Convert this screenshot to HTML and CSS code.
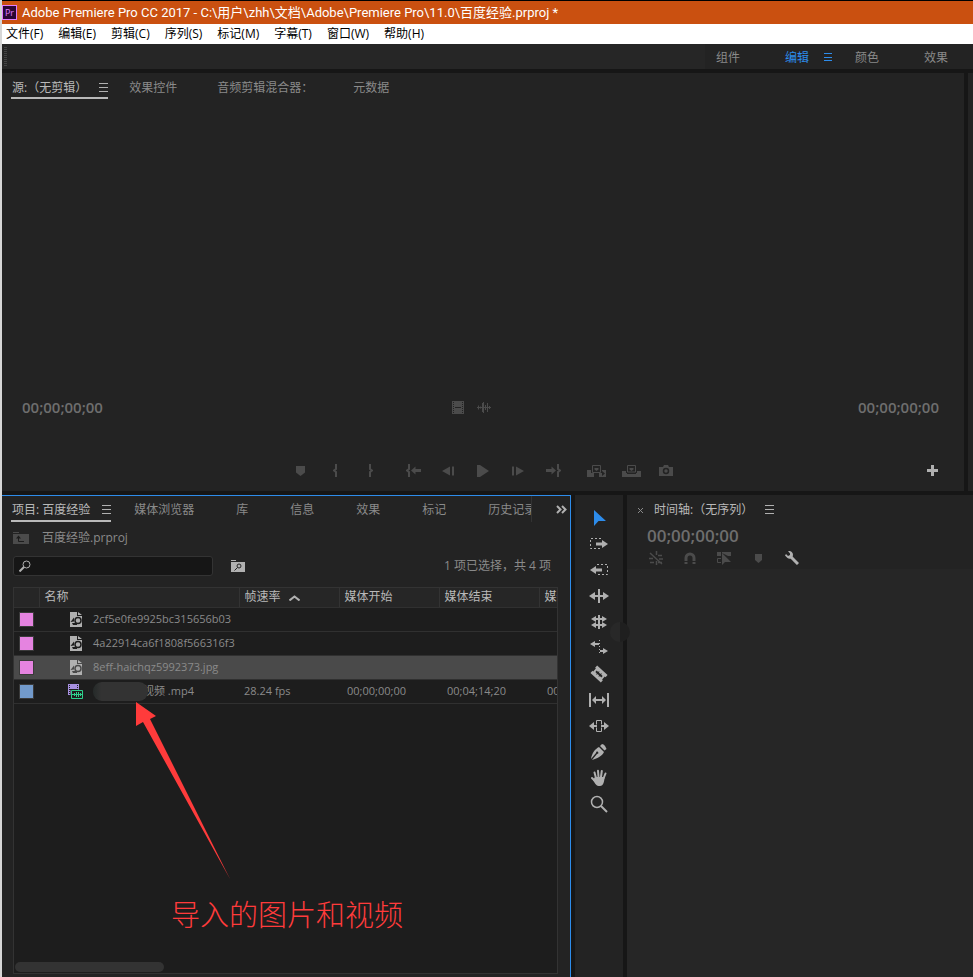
FILE: index.html
```html
<!DOCTYPE html>
<html lang="zh-CN">
<head>
<meta charset="utf-8">
<title>Adobe Premiere Pro CC 2017</title>
<link rel="stylesheet" href="styles.css">
</head>
<body>
<header class="titlebar">
  <span class="app-logo">Pr</span>
  <h1 class="title">Adobe Premiere Pro CC 2017 - C:\用户\zhh\文档\Adobe\Premiere Pro\11.0\百度经验.prproj *</h1>
</header>
<nav class="menubar">
  <button>文件(F)</button><button>编辑(E)</button><button>剪辑(C)</button><button>序列(S)</button><button>标记(M)</button><button>字幕(T)</button><button>窗口(W)</button><button>帮助(H)</button>
</nav>
<nav class="workspaces">
  <span class="grip"></span>
  <div class="workspace-list">
    <a href="#">组件</a>
    <a href="#" class="current">编辑<svg class="burger" width="9" height="9" viewBox="0 0 9 9"><path d="M0 .5h8M0 4.5h8M0 7.5h8"/></svg></a>
    <a href="#">颜色</a>
    <a href="#">效果</a>
  </div>
</nav>
<main class="workarea">
  <div class="upper">
    <section class="panel source">
      <div class="tabs">
        <button class="tab active">源:（无剪辑）<svg class="burger" width="9" height="9" viewBox="0 0 9 9"><path d="M0 .5h9M0 4.5h9M0 8.5h9"/></svg></button>
        <button class="tab">效果控件</button>
        <button class="tab">音频剪辑混合器：</button>
        <button class="tab">元数据</button>
      </div>
      <div class="monitor"></div>
      <div class="times">
        <span class="timecode">00;00;00;00</span>
        <span class="drag-icons">
          <svg width="12" height="13" viewBox="0 0 12 13"><path fill="#4b4b4b" d="M0 0h12v13H0z"/><path stroke="#232323" stroke-dasharray="1 1" d="M1.5 1v12M10.5 1v12"/><path stroke="#232323" d="M3 6.5h6"/></svg>
          <svg width="14" height="11" viewBox="0 0 14 11"><path stroke="#4b4b4b" d="M0 5.5h14M1.5 3.5v4M3.5 4.5v2M5.5 1v9M6.5 0v11M8.5 3v5M10.5 1v9M12.5 4v3"/></svg>
        </span>
        <span class="timecode">00;00;00;00</span>
      </div>
      <div class="transport">
        <div class="group">
          <button aria-label="添加标记"><svg width="9" height="10" viewBox="0 0 9 10"><path fill="#4b4b4b" d="M0 0h9v6.5L4.5 10 0 6.5z"/></svg></button>
          <button aria-label="标记入点"><svg width="5" height="13" viewBox="0 0 5 13"><path class="line" d="M4 .5H3v4.5L1 6.5 3 8v4.5h1"/></svg></button>
          <button aria-label="标记出点"><svg width="5" height="13" viewBox="0 0 5 13"><path class="line" d="M1 .5h1v4.5l2 1.5L2 8v4.5H1"/></svg></button>
        </div>
        <div class="group">
          <button aria-label="转到入点"><svg width="15" height="13" viewBox="0 0 15 13"><path class="line" d="M4 .5H3v4.5L1 6.5 3 8v4.5h1"/><path fill="#4b4b4b" d="M5 6.5 9.5 2.5V5H15v3H9.5v2.5z"/></svg></button>
          <button aria-label="后退一帧"><svg width="12" height="10" viewBox="0 0 12 10"><path fill="#4b4b4b" d="M0 5 8 .5v9zM10 .5h2v9h-2z"/></svg></button>
          <button aria-label="播放"><svg width="12" height="12" viewBox="0 0 12 12"><path fill="#4b4b4b" d="M0 0h3l9 6-9 6H0z"/></svg></button>
          <button aria-label="前进一帧"><svg width="12" height="10" viewBox="0 0 12 10"><path fill="#4b4b4b" d="M12 5 4 .5v9zM0 .5h2v9H0z"/></svg></button>
          <button aria-label="转到出点"><svg width="15" height="13" viewBox="0 0 15 13"><path class="line" d="M11 .5h1v4.5l2 1.5L12 8v4.5h-1"/><path fill="#4b4b4b" d="M10 6.5 5.5 2.5V5H0v3h5.5v2.5z"/></svg></button>
        </div>
        <div class="group">
          <button aria-label="插入"><svg width="19" height="12" viewBox="0 0 19 12"><path fill="#4b4b4b" d="M0 5h4v3h3v4H0zM12 8h3V5h4v7h-7z"/><path fill="none" stroke="#4b4b4b" d="M5.5.5h8v7h-8z"/><path fill="#4b4b4b" d="M7.5 3h4v1.5L9.5 6l-2-1.5z"/><path fill="#232323" d="M15 6l3 2.5-3 2.5z"/></svg></button>
          <button aria-label="覆盖"><svg width="19" height="12" viewBox="0 0 19 12"><path fill="#4b4b4b" d="M0 6h4v2h11V6h4v6H0z"/><path fill="#232323" d="M5 8h9v1H5z"/><path fill="none" stroke="#4b4b4b" d="M5.5.5h8v6.5h-8z"/><path fill="#4b4b4b" d="M7.5 3h4v1.5L9.5 6l-2-1.5z"/></svg></button>
          <button aria-label="导出帧"><svg width="14" height="11" viewBox="0 0 14 11"><path fill="#4b4b4b" d="M0 2h4l1-2h4l1 2h4v9H0z"/><circle cx="7" cy="6" r="2.5" fill="none" stroke="#232323" stroke-width="1.5"/></svg></button>
        </div>
        <button class="add" aria-label="按钮编辑器"><svg width="11" height="11" viewBox="0 0 11 11"><path stroke="#b0b0b0" stroke-width="3" d="M5.5 0v11M0 5.5h11"/></svg></button>
      </div>
    </section>
    <section class="panel"></section>
  </div>
  <div class="lower">
    <section class="panel project">
      <div class="tab-row">
        <div class="tabs">
          <button class="tab active">项目: 百度经验<svg class="burger" width="9" height="9" viewBox="0 0 9 9"><path d="M0 .5h9M0 4.5h9M0 8.5h9"/></svg></button>
          <button class="tab">媒体浏览器</button>
          <button class="tab">库</button>
          <button class="tab">信息</button>
          <button class="tab">效果</button>
          <button class="tab">标记</button>
          <button class="tab">历史记录</button>
        </div>
        <button class="more" aria-label="更多面板"><svg width="11" height="9" viewBox="0 0 11 9"><path fill="none" stroke="#b0b0b0" stroke-width="2" d="M1 1l3.5 3.5L1 8M6 1l3.5 3.5L6 8"/></svg></button>
      </div>
      <div class="path">
        <svg width="16" height="12" viewBox="0 0 16 12"><path fill="#4b4b4b" d="M0 0h6v1H0zM0 2h16v10H0z"/><path fill="none" stroke="#1d1d1d" d="M5.5 4v5.5H11"/><path fill="#1d1d1d" d="M3 6.5 5.5 3.5 8 6.5z"/></svg>
        <span>百度经验.prproj</span>
      </div>
      <div class="search-row">
        <label class="search">
          <svg width="12" height="12" viewBox="0 0 12 12"><circle cx="7.5" cy="4.5" r="3.5" fill="none" stroke="#b0b0b0"/><path stroke="#b0b0b0" stroke-width="2" d="M5 7 .5 11.5"/></svg>
          <input type="text" aria-label="搜索">
        </label>
        <button class="bin" aria-label="从查询创建新的搜索素材箱"><svg width="14" height="12" viewBox="0 0 14 12"><path fill="#b0b0b0" d="M0 0h5v1H0zM0 2h14v10H0z"/><circle cx="8" cy="6" r="2" fill="none" stroke="#232323"/><path stroke="#232323" d="M6.5 7.5l-3 3"/></svg></button>
        <span class="status">1 项已选择，共 4 项</span>
      </div>
      <div class="bin-list">
        <table>
          <colgroup><col class="c-label"><col class="c-name"><col class="c-data"><col class="c-data"><col class="c-data"><col class="c-data"></colgroup>
          <thead>
            <tr><th></th><th>名称</th><th>帧速率<svg class="sort" width="11" height="6" viewBox="0 0 11 6"><path fill="none" stroke="#b0b0b0" stroke-width="2" d="M.5 5.5l5-4 5 4"/></svg></th><th>媒体开始</th><th>媒体结束</th><th>媒体持续时间</th></tr>
          </thead>
          <tbody>
            <tr><td><i class="swatch pink"></i></td><td><div class="item"><svg width="16" height="15" viewBox="0 0 16 15"><path fill="#b0b0b0" d="M2 0h7v4h5v11H2zM10 0l4 3h-4z"/><circle cx="10" cy="8.5" r="3" fill="none" stroke="#1d1d1d" stroke-width="1.5"/><path fill="#1d1d1d" d="M2.5 10 6 5.5v4zM4 11h5v2H5z"/></svg><span>2cf5e0fe9925bc315656b03</span></div></td><td></td><td></td><td></td><td></td></tr>
            <tr><td><i class="swatch pink"></i></td><td><div class="item"><svg width="16" height="15" viewBox="0 0 16 15"><path fill="#b0b0b0" d="M2 0h7v4h5v11H2zM10 0l4 3h-4z"/><circle cx="10" cy="8.5" r="3" fill="none" stroke="#1d1d1d" stroke-width="1.5"/><path fill="#1d1d1d" d="M2.5 10 6 5.5v4zM4 11h5v2H5z"/></svg><span>4a22914ca6f1808f566316f3</span></div></td><td></td><td></td><td></td><td></td></tr>
            <tr class="selected"><td><i class="swatch pink"></i></td><td><div class="item"><svg width="16" height="15" viewBox="0 0 16 15"><path fill="#b0b0b0" d="M2 0h7v4h5v11H2zM10 0l4 3h-4z"/><circle cx="10" cy="8.5" r="3" fill="none" stroke="#4a4a4a" stroke-width="1.5"/><path fill="#4a4a4a" d="M2.5 10 6 5.5v4zM4 11h5v2H5z"/></svg><span>8eff-haichqz5992373.jpg</span></div></td><td></td><td></td><td></td><td></td></tr>
            <tr><td><i class="swatch blue"></i></td><td><div class="item"><svg width="16" height="15" viewBox="0 0 16 15"><path fill="#a68fe0" d="M0 0h11v11H0z"/><path stroke="#1d1d1d" stroke-dasharray="1 1" d="M1.5 1v10M9.5 1v5"/><path fill="#1d1d1d" d="M2 5h7v1H2zM2.5 5.5H16V15H2.5z"/><path fill="none" stroke="#2fd08c" d="M3.5 6.5h11v8h-11z"/><path stroke="#2fd08c" d="M4 10.5h10M6.5 9v3M8.5 8v5M10.5 8v5M12.5 9v3"/></svg><span class="masked"></span><span>视频 .mp4</span></div></td><td>28.24 fps</td><td class="tc">00;00;00;00</td><td class="tc">00;04;14;20</td><td class="tc">00;04;14;21</td></tr>
          </tbody>
        </table>
        <div class="scrollbar"></div>
        <svg class="arrow" width="96" height="180" viewBox="0 0 96 180"><path fill="#ff3b3b" d="M1 1 21 15l-6 3L95 178 8 21 1 25z"/></svg>
        <p class="note">导入的图片和视频</p>
      </div>
    </section>
    <section class="panel tools">
      <button aria-label="选择工具"><svg width="20" height="20" viewBox="0 0 20 20"><path fill="#2d8ceb" d="M5 2v16l4.5-5H17z"/></svg></button>
      <button aria-label="向前选择轨道工具"><svg width="20" height="20" viewBox="0 0 20 20"><path fill="none" stroke="#b0b0b0" stroke-dasharray="2 2" d="M12 4.5H1.5v10H12"/><path fill="#b0b0b0" d="M7 8.5h6V6l6 4-6 4v-2.5H7z"/></svg></button>
      <button aria-label="向后选择轨道工具"><svg width="20" height="20" viewBox="0 0 20 20"><path fill="none" stroke="#b0b0b0" stroke-dasharray="2 2" d="M8 4.5h10.5v10H8"/><path fill="#b0b0b0" d="M13 8.5H7V6l-6 4 6 4v-2.5h6z"/></svg></button>
      <button aria-label="波纹编辑工具"><svg width="20" height="20" viewBox="0 0 20 20"><path fill="#b0b0b0" d="M9 3h2v14H9zM0 10l6-4v3h8V6l6 4-6 4v-3H6v3z"/></svg></button>
      <button aria-label="滚动编辑工具"><svg width="20" height="20" viewBox="0 0 20 20"><path fill="#b0b0b0" d="M9 3h2v14H9zM2 7l5-3v2h6V4l5 3-5 3V8H7v2zM2 13l5-3v2h6v-2l5 3-5 3v-2H7v2z"/></svg></button>
      <button aria-label="比率拉伸工具"><svg width="20" height="20" viewBox="0 0 20 20"><path fill="#b0b0b0" d="M1 6l5-3v2h4v2H6v2zM19 13l-5-3v2h-3v2h3v2z"/><path stroke="#b0b0b0" stroke-dasharray="1 2" d="M10.5 2v15"/></svg></button>
      <button aria-label="剃刀工具"><svg width="20" height="20" viewBox="0 0 20 20"><g transform="rotate(42 10 10)"><path fill="#b0b0b0" d="M3 5h14v3h-1v4h1v3H3v-3h1V8H3z"/><path fill="#232323" d="M6 9h2V8h1v1h2V8h1v1h2v2h-2v1h-1v-1H9v1H8v-1H6z"/></g></svg></button>
      <button aria-label="外滑工具"><svg width="20" height="20" viewBox="0 0 20 20"><path fill="#b0b0b0" d="M0 3h2v14H0zM18 3h2v14h-2zM3 10l4-4v3h6V6l4 4-4 4v-3H7v3z"/></svg></button>
      <button aria-label="内滑工具"><svg width="20" height="20" viewBox="0 0 20 20"><path fill="#b0b0b0" d="M0 10l5-4v3h10V6l5 4-5 4v-3H5v3z"/><path fill="#232323" d="M8 8h4v4H8z"/><path fill="none" stroke="#b0b0b0" d="M7.5 8.5v-4h5v4M7.5 11.5v4h5v-4"/></svg></button>
      <button aria-label="钢笔工具"><svg width="20" height="20" viewBox="0 0 20 20"><path fill="#b0b0b0" d="M11 4l2-2c2 0 4 3 4.5 5l-2 1.5zM10 5l5 5c-2 4-6 6-12 8l5-6c1 0 2-1 1-2s-2 0-2 1l-5 6c1-6 4-10 8-12z"/></svg></button>
      <button aria-label="手形工具"><svg width="20" height="20" viewBox="0 0 20 20"><path fill="none" stroke="#b0b0b0" stroke-width="2" stroke-linecap="round" d="M7 10 5.5 4.5M9.5 9 9 2.800M12 9l.8-6M14.5 10.5 16.5 5.5M6 13 3 10"/><path fill="#b0b0b0" d="M6 9h9.5c0 4-1 9-4.5 9-4 0-4.5-2-7-6z"/></svg></button>
      <button aria-label="缩放工具"><svg width="20" height="20" viewBox="0 0 20 20"><circle cx="8" cy="8" r="5.5" fill="none" stroke="#b0b0b0" stroke-width="1.5"/><path stroke="#b0b0b0" stroke-width="2" d="M12 12l6 6"/></svg></button>
    </section>
    <section class="panel timeline">
      <div class="tabs">
        <button class="close" aria-label="关闭"><svg width="5" height="5" viewBox="0 0 5 5"><path stroke="#8a8a8a" d="M0 0l5 5M5 0 0 5"/></svg></button>
        <button class="tab open">时间轴:（无序列）<svg class="burger" width="9" height="9" viewBox="0 0 9 9"><path d="M0 .5h9M0 4.5h9M0 8.5h9"/></svg></button>
      </div>
      <span class="timecode large">00;00;00;00</span>
      <div class="timeline-tools">
        <button aria-label="嵌套"><svg width="14" height="14" viewBox="0 0 14 14"><path stroke="#4b4b4b" stroke-width="1.5" d="M7.5 0v4M7.5 10v4M9 4.5h4M0 7.5h4M10 8h4M1 11.5h4M9 11.5h4M1 2l12 11"/></svg></button>
        <button aria-label="对齐"><svg width="12" height="12" viewBox="0 0 12 12"><path fill="none" stroke="#4b4b4b" stroke-width="3" d="M2 12V6a4 4 0 0 1 8 0v6"/><path stroke="#232323" d="M0 9.5h12"/></svg></button>
        <button aria-label="链接选择项"><svg width="14" height="14" viewBox="0 0 14 14"><path fill="#4b4b4b" d="M0 1h4v4H0zM5 1h9v4h-3L5 2zM5 2v12l3-3h6z"/><path fill="none" stroke="#4b4b4b" d="M4 7.5H.5v4H4"/></svg></button>
        <button aria-label="添加标记"><svg width="7" height="9" viewBox="0 0 7 9"><path fill="#4b4b4b" d="M0 0h7v6L3.5 9 0 6z"/></svg></button>
        <button aria-label="时间轴显示设置"><svg width="14" height="14" viewBox="0 0 14 14"><path fill="none" stroke="#b0b0b0" stroke-width="3" d="M5.5 5.5 13 13"/><path fill="#b0b0b0" d="M3 0c3-.5 5 1.5 5 4S5 9 2.5 7L0 4.5 1 3l2 2 2-1V2.5z"/></svg></button>
      </div>
      <div class="tracks"></div>
    </section>
  </div>
</main>
</body>
</html>
```
FILE: styles.css
```css
* { box-sizing: border-box; }

body {
  margin: 0;
  height: 100vh;
  display: flex;
  flex-direction: column;
  overflow: hidden;
  border-left: 2px solid #d6d6d6;
  background: #161616;
  color: #8a8a8a;
  font: 12px/16px "Open Sans", "Noto Sans CJK SC", sans-serif;
}

button {
  display: flex;
  align-items: center;
  justify-content: center;
  padding: 0;
  border: 0;
  background: none;
  color: inherit;
  font: inherit;
  white-space: nowrap;
}

a { color: inherit; text-decoration: none; }
svg { display: block; flex: none; }
.burger path { stroke: #b0b0b0; }
.line { fill: none; stroke: #4b4b4b; stroke-width: 2; }

.titlebar {
  display: flex;
  align-items: center;
  gap: 5px;
  height: 24px;
  border-top: 1px solid #000;
  background: #ca5010;
  color: #fff;
}
.app-logo {
  width: 15px;
  height: 15px;
  border: 1px solid #e07cff;
  background: #2a0634;
  color: #e07cff;
  font-size: 9px;
  line-height: 13px;
  text-align: center;
}
.title {
  margin: 0;
  font-family: Roboto, "Noto Sans CJK SC", sans-serif;
  font-size: 13px;
  font-weight: 400;
  white-space: nowrap;
}

.menubar {
  display: flex;
  gap: 15px;
  height: 20px;
  padding-left: 4px;
  background: #fff;
  color: #000;
}

.workspaces {
  display: flex;
  justify-content: space-between;
  height: 25px;
  background: #262626;
}
.grip {
  width: 3px;
  margin: 3px 2px;
  background: repeating-linear-gradient(#444 0 1px, #262626 1px 2px);
}
.workspace-list {
  display: flex;
  align-items: center;
  gap: 45px;
  padding: 2px 25px 0 11px;
  background: #232323;
}
.workspace-list .current {
  display: flex;
  align-items: center;
  gap: 15px;
  margin-right: -23px;
  color: #2d8ceb;
}
.current .burger path { stroke: #2d8ceb; }

.workarea {
  flex: 1;
  display: grid;
  grid-template-rows: 418fr 482fr;
  gap: 4px;
  padding-top: 4px;
  min-height: 0;
}
.upper { display: grid; grid-template-columns: 1fr 5px; gap: 4px; }
.lower {
  display: grid;
  grid-template-columns: 569fr 48px 346fr;
  gap: 4px;
  min-height: 0;
}
.panel { min-width: 0; background: #232323; }

.tabs { display: flex; gap: 42px; height: 26px; overflow: hidden; }
.tab { padding-top: 5px; border-bottom: 2px solid transparent; }
.project .tab { padding-top: 3px; }
.tab.active {
  margin-right: -19px;
  padding-left: 1px;
  border-color: #b9b9b9;
  color: #b9b9b9;
}
.tab .burger { margin-left: 12px; }

.source { display: flex; flex-direction: column; padding: 0 9px; }
.source .tabs { gap: 40px; }
.monitor { flex: 1; }
.timecode { color: #6e6e6e; font-size: 15px; font-weight: 600; line-height: 20px; }
.times {
  display: flex;
  align-items: center;
  justify-content: space-between;
  padding: 0 16px 0 11px;
}
.drag-icons { display: flex; align-items: center; gap: 13px; padding-right: 18px; }
.transport {
  display: grid;
  grid-template-columns: 1fr auto auto auto 1fr;
  gap: 8px;
  align-items: center;
  height: 74px;
  padding-top: 33px;
}
.group { display: flex; }
.group:first-child { grid-column: 2; }
.group button { width: 35px; height: 20px; }
.add { justify-self: end; height: 20px; margin-right: 17px; }

.project {
  display: flex;
  flex-direction: column;
  padding: 0 12px 3px 9px;
  border: solid #2d8ceb;
  border-width: 1px 1px 0 0;
}
.tab-row { display: flex; justify-content: space-between; margin-right: -9px; }
.tab-row .tabs { width: 521px; min-width: 0; border-right: 1px solid #333; }
.path { display: flex; align-items: center; gap: 13px; height: 32px; padding-left: 2px; }
.search-row { display: flex; align-items: center; padding: 2px 7px 11px 2px; }
.search {
  display: flex;
  align-items: center;
  width: 200px;
  height: 20px;
  padding-left: 5px;
  border: 1px solid #333;
  border-radius: 3px;
  background: #161616;
}
.search input {
  flex: 1;
  min-width: 0;
  border: 0;
  outline: 0;
  background: none;
  color: #b9b9b9;
  font: inherit;
}
.bin { margin-left: 18px; }
.status { margin-left: auto; }

.bin-list {
  position: relative;
  flex: 1;
  display: flex;
  flex-direction: column;
  justify-content: space-between;
  margin-left: 2px;
  padding-bottom: 1px;
  overflow: hidden;
  border: 1px solid #333;
  background: #1d1d1d;
}
table { width: 625px; table-layout: fixed; border-collapse: collapse; }
.c-label { width: 25px; }
.c-name { width: 200px; }
.c-data { width: 100px; }
th, td { padding: 0 5px; border-bottom: 1px solid #303030; white-space: nowrap; overflow: hidden; }
th {
  height: 19px;
  border-right: 1px solid #333;
  background: #262626;
  color: #b9b9b9;
  font-weight: 400;
  text-align: left;
}
.sort { display: inline-block; margin-left: 8px; }
td { height: 24px; font-size: 11px; }
td.tc { padding-left: 8px; }
.selected { background: #4a4a4a; }
.swatch { display: block; width: 15px; height: 15px; border: 1px solid #3a3a3a; }
.pink { background: #e583e0; }
.blue { background: #729acb; }
.item { display: flex; align-items: center; padding-left: 24px; }
.item svg { margin-right: 9px; }
.masked {
  position: relative;
  width: 55px;
  height: 19px;
  margin-right: -5px;
  border-radius: 9px;
  background: linear-gradient(90deg, #252a29, #333 15%, #333);
}
.scrollbar { width: 149px; height: 10px; margin-left: 1px; border-radius: 5px; background: #333; }
.arrow { position: absolute; left: 121px; top: 113px; }
.note {
  position: absolute;
  left: 157px;
  top: 308px;
  margin: 0;
  color: #ff3b3b;
  font-size: 29px;
  font-weight: 300;
  line-height: 38px;
  white-space: nowrap;
}

.tools {
  position: relative;
  display: flex;
  flex-direction: column;
  align-items: center;
  gap: 6px;
  padding-top: 13px;
}
.tools::after {
  content: "";
  position: absolute;
  left: 35px;
  top: 127px;
  width: 20px;
  height: 20px;
  border-radius: 10px;
  background: linear-gradient(90deg, #282828 50%, #1f1f1f 50%);
}

.timeline { display: flex; flex-direction: column; }
.timeline .tabs { gap: 11px; padding-left: 11px; }
.timeline .close { padding-top: 4px; }
.timeline .open { color: #b9b9b9; }
.timecode.large { margin: 5px 0 0 20px; font-size: 17px; }
.timeline-tools { display: flex; padding: 1px 0 0 12px; }
.timeline-tools button { width: 34px; height: 22px; }
.tracks { flex: 1; background: #262626; }
```
